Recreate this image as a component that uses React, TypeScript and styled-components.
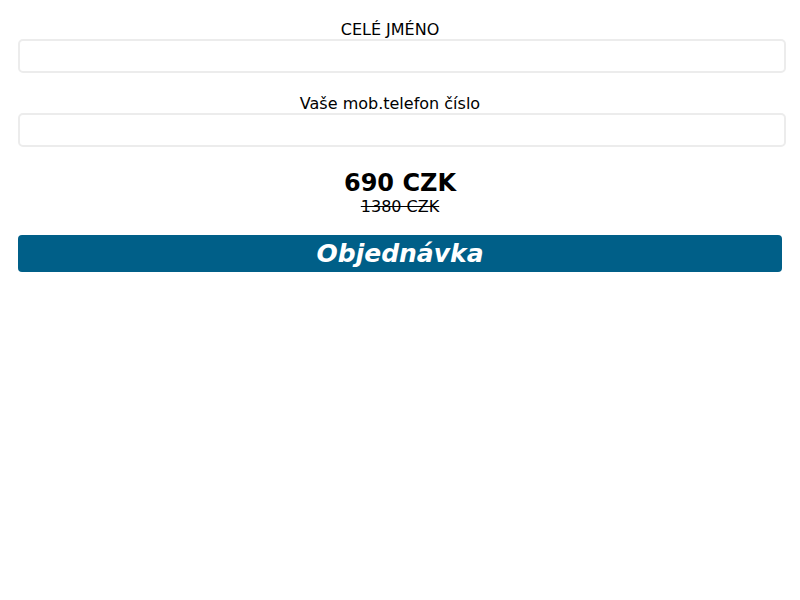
import React from 'react';
import styled, { createGlobalStyle } from 'styled-components';

const GlobalStyle = createGlobalStyle`
  html, body {
    margin: 0;
    padding: 0;
    background: #fff;
    font-family: "DejaVu Sans", sans-serif;
    color: #000;
  }
`;

const Form = styled.form`
  display: flex;
  flex-direction: column;
  padding: 21px 18px 0 18px;
  width: 764px;
`;

const Field = styled.div`
  display: flex;
  flex-direction: column;
  margin-bottom: 22px;
`;

const Label = styled.label`
  text-align: center;
  font-size: 16px;
  line-height: 18px;
  padding-right: 20px;
`;

const Input = styled.input`
  box-sizing: border-box;
  width: calc(100% + 4px);
  height: 34px;
  border: 2px solid #ececec;
  border-radius: 5px;
  background: #fff;
  font: inherit;
  outline: none;
`;

const Price = styled.div`
  display: flex;
  flex-direction: column;
  align-items: center;
`;

const NewPrice = styled.span`
  font-size: 24px;
  font-weight: bold;
  line-height: 28px;
`;

const OldPrice = styled.span`
  font-size: 16px;
  line-height: 20px;
  text-decoration: line-through;
`;

const SubmitButton = styled.button`
  margin-top: 18px;
  height: 37px;
  border: none;
  border-radius: 4px;
  background: #005f88;
  color: #fff;
  font-family: "DejaVu Sans", sans-serif;
  font-size: 25px;
  font-weight: bold;
  font-style: italic;
  cursor: pointer;
  padding: 0;
`;

const App = () => {
  return (
    <>
      <GlobalStyle />
      <Form onSubmit={(e) => e.preventDefault()}>
        <Field>
          <Label>CELÉ JMÉNO</Label>
          <Input type="text" />
        </Field>
        <Field>
          <Label>Vaše mob.telefon číslo</Label>
          <Input type="tel" />
        </Field>
        <Price>
          <NewPrice>690 CZK</NewPrice>
          <OldPrice>1380 CZK</OldPrice>
        </Price>
        <SubmitButton type="submit">Objednávka</SubmitButton>
      </Form>
    </>
  );
};

export default App;
